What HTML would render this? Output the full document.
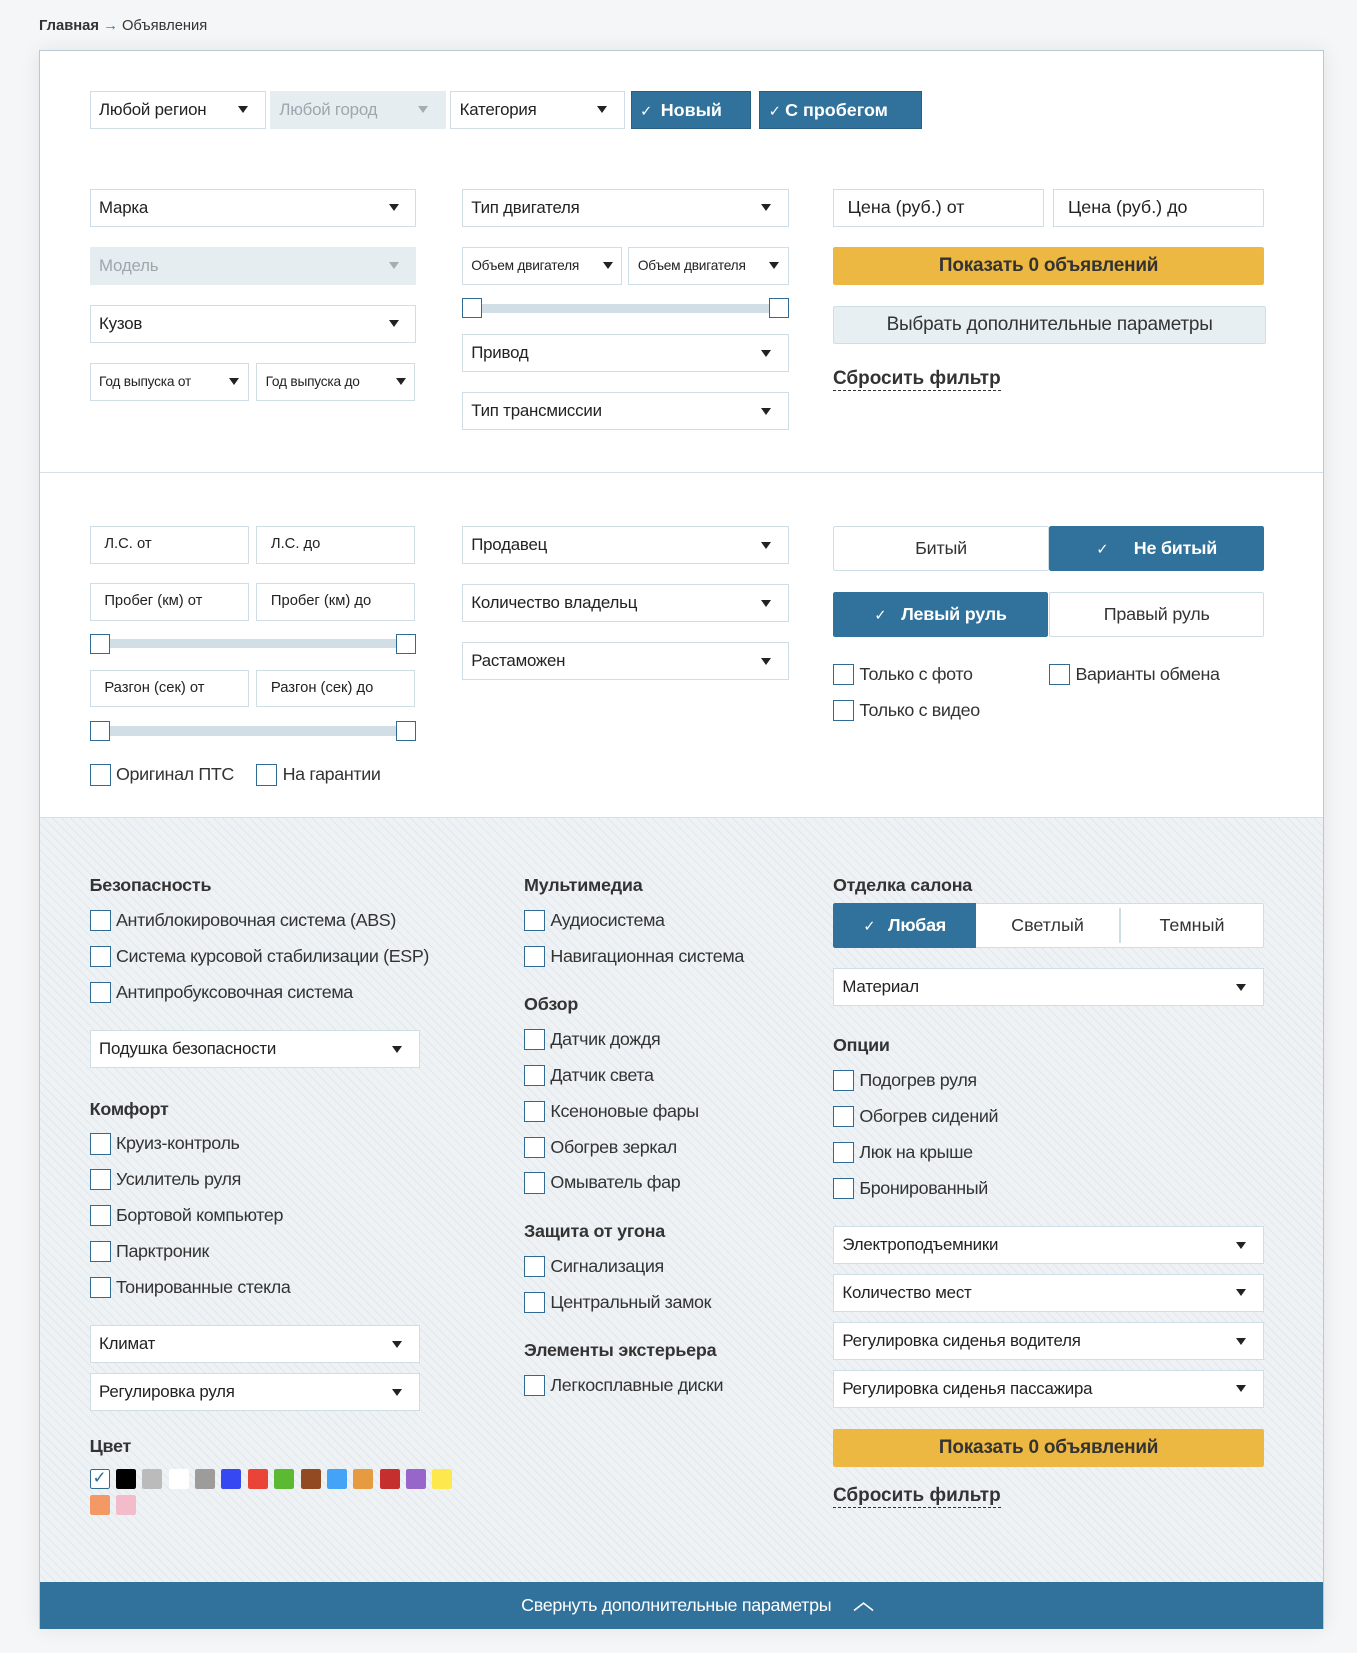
<!DOCTYPE html>
<html><head><meta charset="utf-8">
<style>
html,body{margin:0;padding:0}
body{width:1287px;height:1568px;zoom:1.05439;background:#f5f6f7;font-family:"Liberation Sans","DejaVu Sans",sans-serif;color:#333;position:relative;overflow:hidden}
.a{position:absolute;box-sizing:border-box}
.bc{left:37px;top:17px;font-size:14px;color:#333}
.bc b{font-weight:bold;color:#333}
.panel{left:37px;top:47px;width:1219px;height:1498px;border:1px solid #b9c9d4;background:#fff;box-shadow:0 0 18px rgba(0,0,0,.08)}
.hatch{left:38px;top:775px;width:1217px;height:726px;border-top:1px solid #d6dfe5;background:#eef2f5 repeating-linear-gradient(45deg,rgba(0,0,0,0) 0 5px,rgba(190,205,215,.28) 5px 6px)}
.div{left:38px;top:448px;width:1217px;height:1px;background:#d6dfe5}
.s{height:36px;border:1px solid #cfdde6;background:#fff;font-size:16px;line-height:34px;padding-left:8px;color:#222;white-space:nowrap;overflow:hidden;letter-spacing:-0.2px}
.s::after{content:"";position:absolute;right:16px;top:14px;border-left:5px solid transparent;border-right:5px solid transparent;border-top:7px solid #222}
.s.sm{font-size:13px}
.s.sm::after{right:8px}
.s.dis{background:#e6edf1;border-color:#e6edf1;color:#9ea7ad}
.s.dis::after{border-top-color:#a5adb3}
.i{height:36px;border:1px solid #cfdde6;background:#fff;font-size:16px;line-height:34px;padding-left:13px;color:#222;white-space:nowrap}
.i.sm{font-size:14px}
.btn{height:36px;background:#30729b;color:#fff;font-weight:bold;font-size:17px;line-height:36px;border:1px solid #285f82}
.btn span.ck{font-weight:normal;font-size:14px;margin:0 8px 0 8px}
.y{background:#edb841;border-radius:2px;text-align:center;font-weight:bold;font-size:18px;line-height:36px;height:36px;color:#333;letter-spacing:-0.2px}
.g{background:#e8eff3;border:1px solid #cfdde6;border-radius:2px;text-align:center;font-size:18px;line-height:34px;height:36px;color:#333;letter-spacing:-0.2px}
.rs{font-weight:bold;font-size:18px;color:#333;border-bottom:1px dashed #333;line-height:22px}
.tr{height:9px;background:#d1dee6}
.hd{width:19px;height:19px;border:1.5px solid #2f6b93;background:#fff}
.c{font-size:17px;color:#333;line-height:20px;padding-left:25px;white-space:nowrap;letter-spacing:-0.35px}
.c::before{content:"";position:absolute;left:0;top:0;width:20px;height:20px;box-sizing:border-box;border:1.5px solid #2f6b93;background:#fff}
.h{font-weight:bold;font-size:17px;color:#333;letter-spacing:-0.2px}
.seg{height:43px;border:1px solid #cfdde6;background:#fff;text-align:center;font-size:17px;line-height:41px;color:#333;border-radius:2px;letter-spacing:-0.2px}
.seg.on{background:#30729b;color:#fff;font-weight:bold;border-color:#30729b}
.sw{width:19px;height:19px;border-radius:2px;top:1393px}
.bar{left:38px;top:1500px;width:1217px;height:45px;background:#30729b;color:#fff;text-align:center;font-size:17px;line-height:45px;letter-spacing:-0.3px;padding-left:30px}
</style></head><body>
<div class="a bc"><b>Главная</b> <span style="color:#30729b">→</span> Объявления</div>
<div class="a panel"></div>
<div class="a div"></div>
<div class="a hatch"></div>

<!-- row 1 -->
<div class="a s" style="left:85px;top:86px;width:167px">Любой регион</div>
<div class="a s dis" style="left:256px;top:86px;width:167px">Любой город</div>
<div class="a s" style="left:427px;top:86px;width:166px">Категория</div>
<div class="a btn" style="left:598px;top:86px;width:114px"><span class="ck">✓</span>Новый</div>
<div class="a btn" style="left:720px;top:86px;width:154px"><span class="ck" style="margin-right:4px">✓</span>С пробегом</div>

<!-- col1 -->
<div class="a s" style="left:85px;top:179px;width:310px">Марка</div>
<div class="a s dis" style="left:85px;top:234px;width:310px">Модель</div>
<div class="a s" style="left:85px;top:289px;width:310px">Кузов</div>
<div class="a s sm" style="left:85px;top:344px;width:151px">Год выпуска от</div>
<div class="a s sm" style="left:243px;top:344px;width:151px">Год выпуска до</div>
<!-- col2 -->
<div class="a s" style="left:438px;top:179px;width:310px">Тип двигателя</div>
<div class="a s sm" style="left:438px;top:234px;width:152px">Объем двигателя</div>
<div class="a s sm" style="left:596px;top:234px;width:152px">Объем двигателя</div>
<div class="a tr" style="left:446px;top:288px;width:294px"></div>
<div class="a hd" style="left:438px;top:283px"></div>
<div class="a hd" style="left:729px;top:283px"></div>
<div class="a s" style="left:438px;top:317px;width:310px">Привод</div>
<div class="a s" style="left:438px;top:372px;width:310px">Тип трансмиссии</div>
<!-- col3 -->
<div class="a i" style="left:790px;top:179px;width:200px;font-size:17px">Цена (руб.) от</div>
<div class="a i" style="left:999px;top:179px;width:200px;font-size:17px">Цена (руб.) до</div>
<div class="a y" style="left:790px;top:234px;width:409px">Показать 0 объявлений</div>
<div class="a g" style="left:790px;top:290px;width:411px">Выбрать дополнительные параметры</div>
<div class="a rs" style="left:790px;top:348px">Сбросить фильтр</div>

<!-- section 2 -->
<div class="a i sm" style="left:85px;top:499px;width:151px">Л.С. от</div>
<div class="a i sm" style="left:243px;top:499px;width:151px">Л.С. до</div>
<div class="a i sm" style="left:85px;top:553px;width:151px">Пробег (км) от</div>
<div class="a i sm" style="left:243px;top:553px;width:151px">Пробег (км) до</div>
<div class="a tr" style="left:95px;top:606px;width:292px"></div>
<div class="a hd" style="left:85px;top:601px"></div>
<div class="a hd" style="left:376px;top:601px"></div>
<div class="a i sm" style="left:85px;top:635px;width:151px">Разгон (сек) от</div>
<div class="a i sm" style="left:243px;top:635px;width:151px">Разгон (сек) до</div>
<div class="a tr" style="left:95px;top:689px;width:292px"></div>
<div class="a hd" style="left:85px;top:684px"></div>
<div class="a hd" style="left:376px;top:684px"></div>
<div class="a c" style="left:85px;top:725px">Оригинал ПТС</div>
<div class="a c" style="left:243px;top:725px">На гарантии</div>

<div class="a s" style="left:438px;top:499px;width:310px">Продавец</div>
<div class="a s" style="left:438px;top:554px;width:310px">Количество владельц</div>
<div class="a s" style="left:438px;top:609px;width:310px">Растаможен</div>

<div class="a seg" style="left:790px;top:499px;width:205px">Битый</div>
<div class="a seg on" style="left:995px;top:499px;width:204px"><span style="font-weight:normal;font-size:14px;margin-right:24px">✓</span>Не битый</div>
<div class="a seg on" style="left:790px;top:561px;width:204px"><span style="font-weight:normal;font-size:14px;margin-right:14px">✓</span>Левый руль</div>
<div class="a seg" style="left:995px;top:561px;width:204px">Правый руль</div>
<div class="a c" style="left:790px;top:630px">Только с фото</div>
<div class="a c" style="left:995px;top:630px">Варианты обмена</div>
<div class="a c" style="left:790px;top:664px">Только с видео</div>

<!-- section 3 col1 -->
<div class="a h" style="left:85px;top:830px">Безопасность</div>
<div class="a c" style="left:85px;top:863px">Антиблокировочная система (ABS)</div>
<div class="a c" style="left:85px;top:897px">Система курсовой стабилизации (ESP)</div>
<div class="a c" style="left:85px;top:931px">Антипробуксовочная система</div>
<div class="a s" style="left:85px;top:977px;width:313px">Подушка безопасности</div>
<div class="a h" style="left:85px;top:1042px">Комфорт</div>
<div class="a c" style="left:85px;top:1075px">Круиз-контроль</div>
<div class="a c" style="left:85px;top:1109px">Усилитель руля</div>
<div class="a c" style="left:85px;top:1143px">Бортовой компьютер</div>
<div class="a c" style="left:85px;top:1177px">Парктроник</div>
<div class="a c" style="left:85px;top:1211px">Тонированные стекла</div>
<div class="a s" style="left:85px;top:1257px;width:313px">Климат</div>
<div class="a s" style="left:85px;top:1302px;width:313px">Регулировка руля</div>
<div class="a h" style="left:85px;top:1362px">Цвет</div>
<div class="a sw" style="left:85px;border:1.5px solid #2f6b93;background:#fff;box-sizing:border-box;color:#2f6b93;font-size:16px;line-height:16px;text-align:center">✓</div>
<div class="a sw" style="left:110px;background:#000"></div>
<div class="a sw" style="left:135px;background:#bbb"></div>
<div class="a sw" style="left:160px;background:#fff"></div>
<div class="a sw" style="left:185px;background:#9d9c9b"></div>
<div class="a sw" style="left:210px;background:#3548f2"></div>
<div class="a sw" style="left:235px;background:#e94437"></div>
<div class="a sw" style="left:260px;background:#5cb932"></div>
<div class="a sw" style="left:285px;background:#914a22"></div>
<div class="a sw" style="left:310px;background:#44a2f7"></div>
<div class="a sw" style="left:335px;background:#e79b40"></div>
<div class="a sw" style="left:360px;background:#c5302e"></div>
<div class="a sw" style="left:385px;background:#9866cb"></div>
<div class="a sw" style="left:410px;background:#fde84d"></div>
<div class="a sw" style="left:85px;top:1418px;background:#f39965"></div>
<div class="a sw" style="left:110px;top:1418px;background:#f4bccb"></div>

<!-- col2 -->
<div class="a h" style="left:497px;top:830px">Мультимедиа</div>
<div class="a c" style="left:497px;top:863px">Аудиосистема</div>
<div class="a c" style="left:497px;top:897px">Навигационная система</div>
<div class="a h" style="left:497px;top:943px">Обзор</div>
<div class="a c" style="left:497px;top:976px">Датчик дождя</div>
<div class="a c" style="left:497px;top:1010px">Датчик света</div>
<div class="a c" style="left:497px;top:1044px">Ксеноновые фары</div>
<div class="a c" style="left:497px;top:1078px">Обогрев зеркал</div>
<div class="a c" style="left:497px;top:1112px">Омыватель фар</div>
<div class="a h" style="left:497px;top:1158px">Защита от угона</div>
<div class="a c" style="left:497px;top:1191px">Сигнализация</div>
<div class="a c" style="left:497px;top:1225px">Центральный замок</div>
<div class="a h" style="left:497px;top:1271px">Элементы экстерьера</div>
<div class="a c" style="left:497px;top:1304px">Легкосплавные диски</div>

<!-- col3 -->
<div class="a h" style="left:790px;top:830px">Отделка салона</div>
<div class="a seg" style="left:790px;top:856px;width:409px"></div>
<div class="a seg on" style="left:790px;top:856px;width:136px;border-radius:2px 0 0 2px"><span style="font-weight:normal;font-size:14px;margin-right:12px">✓</span>Любая</div>
<div class="a" style="left:926px;top:857px;width:135px;height:41px;text-align:center;line-height:41px;font-size:17px">Светлый</div>
<div class="a" style="left:1061px;top:861px;width:2px;height:33px;background:#cfdde6"></div>
<div class="a" style="left:1063px;top:857px;width:135px;height:41px;text-align:center;line-height:41px;font-size:17px">Темный</div>
<div class="a s" style="left:790px;top:918px;width:409px">Материал</div>
<div class="a h" style="left:790px;top:982px">Опции</div>
<div class="a c" style="left:790px;top:1015px">Подогрев руля</div>
<div class="a c" style="left:790px;top:1049px">Обогрев сидений</div>
<div class="a c" style="left:790px;top:1083px">Люк на крыше</div>
<div class="a c" style="left:790px;top:1117px">Бронированный</div>
<div class="a s" style="left:790px;top:1163px;width:409px">Электроподъемники</div>
<div class="a s" style="left:790px;top:1208px;width:409px">Количество мест</div>
<div class="a s" style="left:790px;top:1254px;width:409px">Регулировка сиденья водителя</div>
<div class="a s" style="left:790px;top:1299px;width:409px">Регулировка сиденья пассажира</div>
<div class="a y" style="left:790px;top:1355px;width:409px">Показать 0 объявлений</div>
<div class="a rs" style="left:790px;top:1407px">Сбросить фильтр</div>

<div class="a bar">Свернуть дополнительные параметры
<svg width="20" height="12" viewBox="0 0 20 12" style="margin-left:16px;vertical-align:middle"><path d="M1 10 L10 3 L19 10" fill="none" stroke="#fff" stroke-width="1.5"/></svg></div>
</body></html>
